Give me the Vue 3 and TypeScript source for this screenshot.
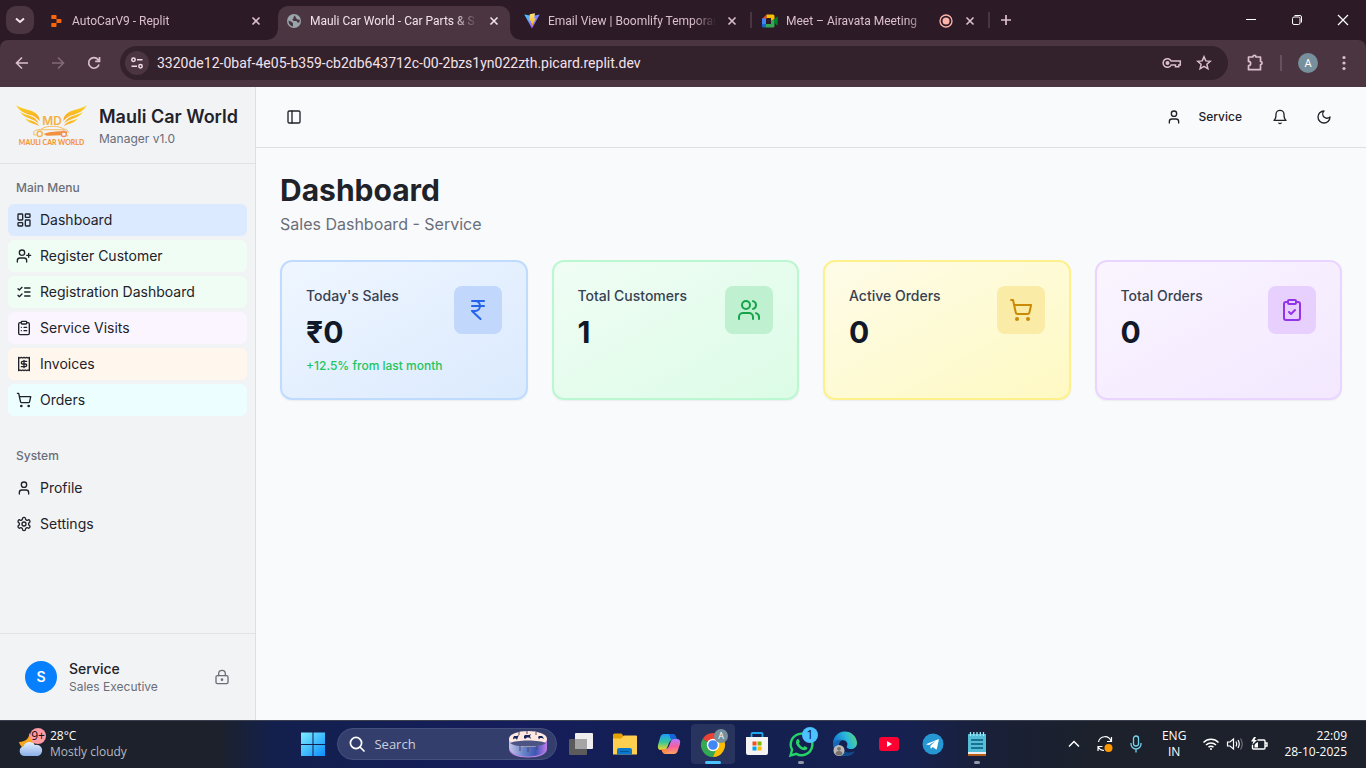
<script setup lang="ts">
import { h, ref } from 'vue'

type Shape = [string, Record<string, string | number>]

const p = (d: string): Shape => ['path', { d }]
const c = (cx: number, cy: number, r: number): Shape => ['circle', { cx, cy, r }]
const r = (x: number, y: number, width: number, height: number, rx: number): Shape => ['rect', { x, y, width, height, rx }]

const clipboard: Shape[] = [
  r(8, 2, 8, 4, 1),
  p('M16 4h2a2 2 0 0 1 2 2v14a2 2 0 0 1-2 2H6a2 2 0 0 1-2-2V6a2 2 0 0 1 2-2h2'),
]

const shapes: Record<string, Shape[]> = {
  dashboard: [r(3, 3, 7, 9, 1), r(14, 3, 7, 5, 1), r(14, 12, 7, 9, 1), r(3, 16, 7, 5, 1)],
  userPlus: [p('M16 21v-2a4 4 0 0 0-4-4H6a4 4 0 0 0-4 4v2'), c(9, 7, 4), p('M19 8v6M22 11h-6')],
  listChecks: [p('m3 17 2 2 4-4M3 7l2 2 4-4M13 6h8M13 12h8M13 18h8')],
  clipboardList: [...clipboard, p('M12 11h4M12 16h4M8 11h.01M8 16h.01')],
  clipboardCheck: [...clipboard, p('m9 14 2 2 4-4')],
  receipt: [
    p('M4 2v20l2-1 2 1 2-1 2 1 2-1 2 1 2-1 2 1V2l-2 1-2-1-2 1-2-1-2 1-2-1-2 1Z'),
    p('M16 8h-6a2 2 0 1 0 0 4h4a2 2 0 1 1 0 4H8M12 17.5v-11'),
  ],
  cart: [
    c(8, 21, 1),
    c(19, 21, 1),
    p('M2.05 2.05h2l2.66 12.42a2 2 0 0 0 2 1.58h9.78a2 2 0 0 0 1.95-1.57l1.65-7.43H5.12'),
  ],
  user: [p('M19 21v-2a4 4 0 0 0-4-4H9a4 4 0 0 0-4 4v2'), c(12, 7, 4)],
  settings: [
    p('M12.22 2h-.44a2 2 0 0 0-2 2v.18a2 2 0 0 1-1 1.73l-.43.25a2 2 0 0 1-2 0l-.15-.08a2 2 0 0 0-2.73.73l-.22.38a2 2 0 0 0 .73 2.73l.15.1a2 2 0 0 1 1 1.72v.51a2 2 0 0 1-1 1.74l-.15.09a2 2 0 0 0-.73 2.73l.22.38a2 2 0 0 0 2.73.73l.15-.08a2 2 0 0 1 2 0l.43.25a2 2 0 0 1 1 1.73V20a2 2 0 0 0 2 2h.44a2 2 0 0 0 2-2v-.18a2 2 0 0 1 1-1.73l.43-.25a2 2 0 0 1 2 0l.15.08a2 2 0 0 0 2.73-.73l.22-.39a2 2 0 0 0-.73-2.73l-.15-.08a2 2 0 0 1-1-1.74v-.5a2 2 0 0 1 1-1.74l.15-.09a2 2 0 0 0 .73-2.73l-.22-.38a2 2 0 0 0-2.73-.73l-.15.08a2 2 0 0 1-2 0l-.43-.25a2 2 0 0 1-1-1.73V4a2 2 0 0 0-2-2z'),
    c(12, 12, 3),
  ],
  lock: [c(12, 16, 1), r(3, 10, 18, 12, 2), p('M7 10V7a5 5 0 0 1 10 0v3')],
  panel: [r(3, 3, 18, 18, 2), p('M9 3v18')],
  bell: [p('M6 8a6 6 0 0 1 12 0c0 7 3 9 3 9H3s3-2 3-9M10.3 21a1.94 1.94 0 0 0 3.4 0')],
  moon: [p('M12 3a6 6 0 0 0 9 9 9 9 0 1 1-9-9Z')],
  rupee: [p('M6 3h12M6 8h12M6 13l8.5 8M6 13h3M9 13c6.667 0 6.667-10 0-10')],
  users: [
    p('M16 21v-2a4 4 0 0 0-4-4H6a4 4 0 0 0-4 4v2'),
    c(9, 7, 4),
    p('M22 21v-2a4 4 0 0 0-3-3.87M16 3.13a4 4 0 0 1 0 7.75'),
  ],
}

const LineIcon = (props: { name: string; size?: number }) =>
  h(
    'svg',
    {
      width: props.size ?? 16,
      height: props.size ?? 16,
      viewBox: '0 0 24 24',
      fill: 'none',
      stroke: 'currentColor',
      'stroke-width': 2,
      'stroke-linecap': 'round',
      'stroke-linejoin': 'round',
      'aria-hidden': 'true',
    },
    shapes[props.name].map(([tag, attrs]) => h(tag, attrs)),
  )
LineIcon.props = ['name', 'size']

interface Tab { id: string; title: string; active?: boolean; recording?: boolean; divider?: boolean }
const tabs: Tab[] = [
  { id: 'replit', title: 'AutoCarV9 - Replit' },
  { id: 'globe', title: 'Mauli Car World - Car Parts & S', active: true },
  { id: 'vite', title: 'Email View | Boomlify Temporar', divider: true },
  { id: 'meet', title: 'Meet – Airavata Meeting', recording: true, divider: true },
]

const url = ref('3320de12-0baf-4e05-b359-cb2db643712c-00-2bzs1yn022zth.picard.replit.dev')

const mainMenu = [
  { label: 'Dashboard', icon: 'dashboard', tone: 'blue' },
  { label: 'Register Customer', icon: 'userPlus', tone: 'green' },
  { label: 'Registration Dashboard', icon: 'listChecks', tone: 'green' },
  { label: 'Service Visits', icon: 'clipboardList', tone: 'purple' },
  { label: 'Invoices', icon: 'receipt', tone: 'orange' },
  { label: 'Orders', icon: 'cart', tone: 'cyan' },
]
const systemMenu = [
  { label: 'Profile', icon: 'user' },
  { label: 'Settings', icon: 'settings' },
]

const stats = [
  { label: "Today's Sales", value: '₹0', note: '+12.5% from last month', icon: 'rupee', tone: 'blue' },
  { label: 'Total Customers', value: '1', note: '', icon: 'users', tone: 'green' },
  { label: 'Active Orders', value: '0', note: '', icon: 'cart', tone: 'yellow' },
  { label: 'Total Orders', value: '0', note: '', icon: 'clipboardCheck', tone: 'purple' },
]
</script>

<template>
  <div class="screen">
    <header class="browser">
      <div class="tabstrip">
        <button class="tab-search" aria-label="Search tabs">
          <svg width="12" height="12" viewBox="0 0 12 12" fill="none" stroke="currentColor" stroke-width="2"><path d="M2 4.500 6 8l4-3.500" /></svg>
        </button>
        <div v-for="tab in tabs" :key="tab.id" class="tab" :class="{ active: tab.active, divider: tab.divider }">
          <svg v-if="tab.id === 'replit'" class="favicon" viewBox="0 0 16 16" fill="#fb650b">
            <path d="M4 2h3.800q.7 0 .7.700V6H4Q3.300 6 3.300 5.300V2.700Q3.300 2 4 2ZM8.500 6h4.200q.7 0 .7.700v2.600q0 .7-.7.700H8.500ZM4 10h4.500v3.300q0 .7-.7.700H4q-.7 0-.7-.7v-2.600Q3.300 10 4 10Z" />
          </svg>
          <svg v-else-if="tab.id === 'globe'" class="favicon" viewBox="0 0 16 16">
            <circle cx="8" cy="8" r="7" fill="#9aa5ab" />
            <path d="M2.500 7.500 6 9l1 1.500v3q-4.500-.8-4.500-6ZM9 2.500 7.500 4v1.500L6.200 6.500 7.500 8h3l1 1.500 1.500.3q1-1.300.8-3L11.500 6.500 10 5Z" fill="#4a3541" />
          </svg>
          <svg v-else-if="tab.id === 'vite'" class="favicon" viewBox="0 0 16 16">
            <defs>
              <linearGradient id="vt" x1="0" y1="0" x2="1" y2="1"><stop offset="0" stop-color="#41d1ff" /><stop offset="1" stop-color="#bd34fe" /></linearGradient>
              <linearGradient id="vy" x1="0" y1="0" x2="0" y2="1"><stop offset="0" stop-color="#ffea83" /><stop offset="1" stop-color="#ffa800" /></linearGradient>
            </defs>
            <path d="M.3 1.500 8 15.500 15.700 1.500 8.500 3Z" fill="url(#vt)" />
            <path d="m11 .2-5.200 1-.4 6.800 1.800-.3-.5 2.600 1.400-.3-.2 3.300 4-8-1.800.2Z" fill="url(#vy)" />
          </svg>
          <svg v-else class="favicon" viewBox="0 0 16 16">
            <path d="M0 6 4.500 1.500V6Z" fill="#ea4335" />
            <path d="M4.500 1.500H11q1.500 0 1.500 1.500v3L9 8V5H4.500Z" fill="#fbbc04" />
            <path d="M0 5.500h4v5.500H0Z" fill="#4285f4" />
            <path d="M0 11h4v3.500H1.500Q0 14.500 0 13Z" fill="#1967d2" />
            <path d="M4 11h5V8l3.500-2v7q0 1.500-1.500 1.500H4Z" fill="#34a853" />
            <path d="m12 6.500 3-2.700q.7-.5.700.4v7.600q0 .9-.7.400L12 9.500Z" fill="#00832d" />
          </svg>
          <span class="tab-title">{{ tab.title }}</span>
          <svg v-if="tab.recording" class="recording" viewBox="0 0 16 16"><circle cx="8" cy="8" r="6" fill="none" stroke="#ffb4ab" stroke-width="1.300" /><circle cx="8" cy="8" r="3.500" fill="#ffb4ab" /></svg>
          <button class="tab-close" :aria-label="`Close ${tab.title}`">
            <svg width="10" height="10" viewBox="0 0 10 10" stroke="currentColor" stroke-width="1.600"><path d="m1.500 1.500 7 7M8.500 1.500l-7 7" /></svg>
          </button>
        </div>
        <button class="new-tab" aria-label="New tab">
          <svg width="12" height="12" viewBox="0 0 12 12" stroke="currentColor" stroke-width="1.700"><path d="M6 1v10M1 6h10" /></svg>
        </button>
        <div class="window-buttons">
          <button aria-label="Minimize"><svg width="12" height="12" viewBox="0 0 12 12" stroke="#fff"><path d="M1 5.500h10" /></svg></button>
          <button aria-label="Restore"><svg width="12" height="12" viewBox="0 0 12 12" fill="none" stroke="#fff"><rect x="1.500" y="3" width="7.500" height="7.500" rx="1.500" /><path d="M3.500 1.500H9q1.500 0 1.500 1.500v5.500" /></svg></button>
          <button aria-label="Close window"><svg width="12" height="12" viewBox="0 0 12 12" stroke="#fff" stroke-width="1.200"><path d="m1 1 10 10M11 1 1 11" /></svg></button>
        </div>
      </div>

      <div class="toolbar">
        <button class="nav-button" aria-label="Back"><svg width="16" height="16" viewBox="0 0 16 16" fill="none" stroke="currentColor" stroke-width="1.600"><path d="M14 8H3M8 2.500 2.500 8 8 13.500" /></svg></button>
        <button class="nav-button dim" aria-label="Forward"><svg width="16" height="16" viewBox="0 0 16 16" fill="none" stroke="currentColor" stroke-width="1.600"><path d="M2 8h11M8 2.500 13.500 8 8 13.500" /></svg></button>
        <button class="nav-button" aria-label="Reload"><svg width="16" height="16" viewBox="0 0 16 16" fill="none" stroke="currentColor" stroke-width="1.700"><path d="M13 9.500A5.300 5.300 0 1 1 12 4.500L13.300 6M13.500 2v4.300H9.200" /></svg></button>
        <div class="omnibox">
          <button class="site-info" aria-label="View site information">
            <svg width="14" height="14" viewBox="0 0 14 14" fill="none" stroke="currentColor" stroke-width="1.500"><circle cx="3.500" cy="3.800" r="1.700" /><path d="M7 3.800h5.500M1.500 10.200H7" /><circle cx="10.500" cy="10.200" r="1.700" /></svg>
          </button>
          <input v-model="url" class="url" aria-label="Address" spellcheck="false">
          <button class="plain" aria-label="Manage passwords"><svg width="20" height="16" viewBox="0 0 20 16" fill="none" stroke="currentColor" stroke-width="1.500"><path d="M9.200 6H18.300v4h-1.500v1.800h-3.300V10H9.200a4.300 4.300 0 1 1 0-4Z" /><circle cx="5.500" cy="8" r="1.300" fill="currentColor" /></svg></button>
          <button class="plain" aria-label="Bookmark"><svg width="16" height="16" viewBox="0 0 16 16" fill="none" stroke="currentColor" stroke-width="1.500"><path d="m8 1.700 1.800 4.200 4.500.4-3.400 3 1 4.500L8 11.400l-3.900 2.400 1-4.500-3.400-3 4.500-.4Z" /></svg></button>
        </div>
        <button class="extensions" aria-label="Extensions"><svg width="18" height="18" viewBox="0 0 18 18" fill="none" stroke="currentColor" stroke-width="1.700"><path d="M2.500 3h4.300a1.600 1.600 0 0 1 3.200 0h4.500v4.500a1.600 1.600 0 0 1 0 3.200v5H2.500v-4a2.100 2.100 0 0 0 0-4.300Z" stroke-linejoin="round" /></svg></button>
        <span class="toolbar-rule"></span>
        <button class="profile" aria-label="Profile A">A</button>
        <button class="more" aria-label="Browser menu"><svg width="4" height="16" viewBox="0 0 4 16" fill="currentColor"><circle cx="2" cy="2.500" r="1.600" /><circle cx="2" cy="8" r="1.600" /><circle cx="2" cy="13.500" r="1.600" /></svg></button>
      </div>
    </header>

    <div class="app">
      <aside class="sidebar">
        <div class="brand">
          <svg class="logo" viewBox="0 0 72 44" role="img" aria-label="Mauli Car World logo">
            <defs>
              <linearGradient id="wing" x1="0" y1="0" x2="0" y2="1"><stop offset="0" stop-color="#fcd21c" /><stop offset="1" stop-color="#f6a32c" /></linearGradient>
              <g id="feathers" fill="url(#wing)">
                <path d="M0 2c6 4 14 4 20 8 3 2 4 5 4 8-4-5-8-6-12-7C7 9.500 3 7 0 2Z" />
                <path d="M4 8.800c5 3 10 3 14 5.500 2.500 1.700 4 3.700 5 6.200-4-3.500-7-4-10.500-5.500C9 13.500 6.500 12 4 8.800Z" />
                <path d="M9.500 15.500c3 1.800 6 1.800 9 3.200 2.500 1.200 4 2.600 5 4.300-3-1.800-5.500-2-8-3-2.500-1-4.500-2.200-6-4.500Z" />
              </g>
            </defs>
            <use href="#feathers" />
            <use href="#feathers" transform="matrix(-1 0 0 1 72 0)" />
            <text x="36.500" y="22.500" class="logo-initials">MD</text>
            <path d="M18 29c1-2 4-2 7-2.500 4-2.600 7-3.200 13-3.200 5 0 8 1.400 11 2.900 3 .5 4 1.500 4 3.800M23 26.800h26" fill="none" stroke="#f3bd62" stroke-width="1" />
            <path d="M28 31c6-2 12-3 24-2.500l-1 2.500c-2-2-5-1-5.500 1.500L33 33c-2 0-3-.8-5-2Z" fill="#f2913d" />
            <circle cx="24" cy="31" r="2.600" fill="none" stroke="#f3b34c" stroke-width="1.400" />
            <circle cx="48.500" cy="31" r="2.600" fill="none" stroke="#ef8f62" stroke-width="1.400" />
            <path d="M18 29v3h3M51 33h2" fill="none" stroke="#f5bd60" />
            <text x="36" y="42" class="logo-name">MAULI CAR WORLD</text>
          </svg>
          <div>
            <div class="brand-name">Mauli Car World</div>
            <div class="brand-sub">Manager v1.0</div>
          </div>
        </div>

        <nav class="menus">
          <section class="menu">
            <h2>Main Menu</h2>
            <a v-for="item in mainMenu" :key="item.label" href="#" :class="item.tone"><LineIcon :name="item.icon" /><span>{{ item.label }}</span></a>
          </section>
          <section class="menu">
            <h2>System</h2>
            <a v-for="item in systemMenu" :key="item.label" href="#"><LineIcon :name="item.icon" /><span>{{ item.label }}</span></a>
          </section>
        </nav>

        <div class="account">
          <span class="avatar">S</span>
          <div class="account-text">
            <div class="account-name">Service</div>
            <div class="account-role">Sales Executive</div>
          </div>
          <button class="lock" aria-label="Lock"><LineIcon name="lock" /></button>
        </div>
      </aside>

      <div class="content">
        <div class="topbar">
          <button class="panel-toggle" aria-label="Toggle sidebar"><LineIcon name="panel" /></button>
          <div class="topbar-actions">
            <button class="user-button"><LineIcon name="user" />Service</button>
            <button class="icon-button" aria-label="Notifications"><LineIcon name="bell" /></button>
            <button class="icon-button" aria-label="Toggle theme"><LineIcon name="moon" /></button>
          </div>
        </div>
        <main>
          <h1>Dashboard</h1>
          <p class="subtitle">Sales Dashboard - Service</p>
          <div class="cards">
            <article v-for="stat in stats" :key="stat.label" class="card" :class="stat.tone">
              <div>
                <p class="card-label">{{ stat.label }}</p>
                <p class="card-value">{{ stat.value }}</p>
                <p v-if="stat.note" class="card-note">{{ stat.note }}</p>
              </div>
              <span class="card-icon"><LineIcon :name="stat.icon" :size="24" /></span>
            </article>
          </div>
        </main>
      </div>
    </div>

    <footer class="taskbar">
      <button class="weather">
        <svg width="28" height="32" viewBox="0 0 28 32">
          <defs><linearGradient id="cloud" x1="0" y1="0" x2="0" y2="1"><stop offset="0" stop-color="#e5efff" /><stop offset="1" stop-color="#8aaee8" /></linearGradient></defs>
          <path d="M11 5c1 5-4 9-10 9 1 4 4 7 9 7 6 0 10-7 1-16Z" fill="#f6a51c" />
          <path d="M6 28a5 5 0 0 1-.5-9.800A6.500 6.500 0 0 1 17 17a5.600 5.600 0 0 1 3 11Z" fill="url(#cloud)" />
          <circle cx="20" cy="8" r="8" fill="#ff99a4" />
          <text x="20" y="12" class="badge-text">9+</text>
        </svg>
        <span><b>28°C</b><br>Mostly cloudy</span>
      </button>

      <div class="pinned">
        <button class="task" aria-label="Start">
          <svg width="24" height="24" viewBox="0 0 24 24">
            <defs><linearGradient id="win" x1="0" y1="0" x2="1" y2="1"><stop offset="0" stop-color="#7eeeff" /><stop offset="1" stop-color="#0a8dff" /></linearGradient></defs>
            <path d="M0 .5h11.500V12H0ZM12.500.500H24V12H12.500ZM0 13h11.500v11H0ZM12.500 13H24v11H12.500Z" fill="url(#win)" />
          </svg>
        </button>
        <label class="search">
          <svg width="16" height="16" viewBox="0 0 16 16" fill="none" stroke="#fff" stroke-width="1.700"><circle cx="7" cy="7" r="5.600" /><path d="m11 11 4 4" stroke-linecap="round" /></svg>
          <input type="search" placeholder="Search" aria-label="Search">
          <svg width="40" height="28" viewBox="0 0 40 28">
            <defs><linearGradient id="drum"><stop offset="0" stop-color="#c7c3e8" /><stop offset=".4" stop-color="#6482c8" /><stop offset=".7" stop-color="#3e56b4" /><stop offset="1" stop-color="#c07af0" /></linearGradient></defs>
            <path d="M1 9v9c0 5 8 9 19 9s19-4 19-9V9Z" fill="url(#drum)" />
            <path d="M1 17c0 6 8 9.500 19 9.500S39 23 39 17v2c0 5-8 8.500-19 8.500S1 24 1 19Z" fill="#bc83e7" />
            <ellipse cx="20" cy="9" rx="19" ry="8" fill="#ffe8e0" />
            <path d="M2 13c3-1.500 10-2.500 18-2.500s15 1 18 2.500c-3 2.500-9 3.500-18 3.500S5 15.500 2 13Z" fill="#4b5484" />
            <path d="M11 2v3M19 1v3M28 2v3M12 16v5M20 17v5M29 16v4" stroke="#514667" />
            <path d="m5 8 1-2h3l2-1-1 2-1 3-1-1.500H6l-1 1ZM16 6l1-1h4l2-1-1 2 1 3-2-1.500h-2L17 9l-1-1ZM30 7l1-1h3l1 1 1 2-2-1h-2l-1 1.500Z" fill="#17245b" />
          </svg>
        </label>
        <button class="task" aria-label="Task view"><svg width="24" height="24" viewBox="0 0 24 24"><rect y="7" width="18" height="16" rx="1" fill="#5b5b5b" /><rect x="6" y="1" width="18" height="16" rx="1" fill="#eee" /><path d="M6 7h12v10H6Z" fill="#a5a5a5" /></svg></button>
        <button class="task" aria-label="File Explorer">
          <svg width="26" height="24" viewBox="0 0 26 24"><path d="M1 3q0-1.500 1.500-1.500h7l2 2.500H24q1 0 1 1v8H1Z" fill="#e5a100" /><path d="M1 6.500h8l3-3h12q1 0 1 1V22q0 .5-.5.500h-23Q1 22.500 1 22Z" fill="#ffd04f" /><path d="M5 22.500V18q0-2 2-2h11q2 0 2 2v4.500Z" fill="#0b78cf" /><path d="M8 19.500h9" stroke="#075593" /></svg>
        </button>
        <button class="task" aria-label="Copilot">
          <svg width="24" height="24" viewBox="0 0 24 24">
            <defs>
              <linearGradient id="ca" x1="0" y1="0" x2="0" y2="1"><stop offset="0" stop-color="#1b9cff" /><stop offset=".5" stop-color="#35c69e" /><stop offset="1" stop-color="#f3d524" /></linearGradient>
              <linearGradient id="cb" x1="0" y1="0" x2="0" y2="1"><stop offset="0" stop-color="#b57aff" /><stop offset=".5" stop-color="#f65f9f" /><stop offset="1" stop-color="#ffa35c" /></linearGradient>
            </defs>
            <path d="M7 2h9q2 0 3 3l1 3h-5q-2 0-3 3l-2 5q-1 2-3 2H4q-4 0-3-5L3 6q1-4 4-4Z" fill="url(#ca)" />
            <path d="M12 2h4q2 0 3 3l1 3h-5q-1 0-2-3Z" fill="#1664d8" />
            <path d="M17 22H8q-2 0-3-3l-.5-2H9q2 0 3-3l2-5q1-2 3-2h3q4 0 3 5l-2 6q-1 4-4 4Z" fill="url(#cb)" />
            <path d="M8 22q-2 0-3-3l-.5-2H9q1 0 1.500 2Z" fill="#ff8b49" />
          </svg>
        </button>
        <button class="task current" aria-label="Google Chrome">
          <svg width="30" height="30" viewBox="0 0 30 30">
            <path d="M15 16 4.600 10a12 12 0 0 1 20.800 0Z" fill="#ea4335" />
            <path d="M15 16 4.600 10A12 12 0 0 0 15 28l6-9Z" fill="#34a853" />
            <path d="M15 16h5.200L15 28A12 12 0 0 0 25.400 10H15Z" fill="#fbbc04" />
            <circle cx="15" cy="16" r="6.200" fill="#fff" /><circle cx="15" cy="16" r="4.800" fill="#4285f4" />
            <circle cx="23" cy="7" r="7" fill="#78909c" /><text x="23" y="10" class="chrome-badge">A</text>
          </svg>
        </button>
        <button class="task" aria-label="Microsoft Store">
          <svg width="24" height="24" viewBox="0 0 24 24"><path d="M6.500 6V2q0-1 1-1h9q1 0 1 1v4" fill="none" stroke="#1ca7ef" stroke-width="1.800" /><path d="M1 5h22v16q0 2-2 2H3q-2 0-2-2Z" fill="#f4f4f4" /><path d="M7.500 9.500h4v4h-4Z" fill="#f25022" /><path d="M12.500 9.500h4v4h-4Z" fill="#7fba00" /><path d="M7.500 14.500h4v4h-4Z" fill="#00a4ef" /><path d="M12.500 14.500h4v4h-4Z" fill="#ffb900" /></svg>
        </button>
        <button class="task open" aria-label="WhatsApp">
          <svg width="34" height="34" viewBox="0 0 34 34">
            <path d="m6.500 28.500 1.600-5.800a10.800 10.800 0 1 1 4.200 4.200Z" fill="none" stroke="#25d366" stroke-width="2.400" />
            <path d="M13 12.500c.8-.8 1.700-.5 2 .3l.7 1.800c.2.500-.1 1-.8 1.700 1 2 2.300 3.300 4.300 4.200.8-1 1.200-1.400 1.700-1.200l2 1c.7.400.5 1.500-.3 2.300-3.500 3-11.300-3.500-10.600-7.800.1-1 .5-1.800 1-2.300Z" fill="#25d366" />
            <circle cx="26" cy="8" r="8" fill="#4cc2ff" /><text x="26" y="12" class="badge-text">1</text>
          </svg>
        </button>
        <button class="task" aria-label="Microsoft Edge">
          <svg width="26" height="26" viewBox="0 0 26 26">
            <defs><linearGradient id="edge" x1="0" y1=".3" x2="1" y2="0"><stop offset="0" stop-color="#1679cf" /><stop offset=".5" stop-color="#29b8dc" /><stop offset="1" stop-color="#62d66f" /></linearGradient></defs>
            <path d="M1 13A12 12 0 0 1 25 12c0 4-3 6-6 6-3.500 0-5-1.500-4-3 1.500-3-1-6-5-6-4 0-7 2-9 4Z" fill="url(#edge)" />
            <path d="M1 13c2-4 6-5 9.500-4C7 10.500 6 14 8 18c2 4 7 6 14 4a12 12 0 0 1-9 3C6 25 1 19.500 1 13Z" fill="#1769b8" />
            <path d="M8 14c0 6 6 9 13.500 6.500.8-.3 1.300 0 .8.800A12 12 0 0 1 13 25c-4-2-6-6-5-11Z" fill="#114a8b" />
            <circle cx="7" cy="19.500" r="5.500" fill="#bcb9b5" /><circle cx="7" cy="17.800" r="1.900" fill="#77726f" /><path d="M3.500 23q0-3 3.500-3t3.500 3q-3.500 3-7 0Z" fill="#77726f" />
          </svg>
        </button>
        <button class="task" aria-label="YouTube"><svg width="20" height="14" viewBox="0 0 20 14"><rect width="20" height="14" rx="3" fill="#f03" /><path d="M8 4v6l5-3Z" fill="#fff" /></svg></button>
        <button class="task" aria-label="Telegram"><svg width="22" height="22" viewBox="0 0 22 22"><circle cx="11" cy="11" r="10.500" fill="#2598d4" /><path d="m4.500 11 11.700-4.800q.8-.2.600.8l-2 9q-.2.800-1 .3l-3-2.200-1.500 1.500q-.5.400-.6-.3l-.4-2.500 5.500-5-6.800 4.300-2.600-.7q-.5-.2.100-.4Z" fill="#fff" /></svg></button>
        <button class="task open" aria-label="Notepad"><svg width="20" height="26" viewBox="0 0 20 26"><path d="M1 3h18v18H1Z" fill="#54bdd7" /><path d="M1 21h18v2H1Z" fill="#eee" /><path d="M1 23h18v2H1Z" fill="#b75e1b" /><path d="M4 9h12M4 13h12M4 17h12" stroke="#075a7d" stroke-width="1.500" /><path d="M3.500 1v4M6.800 1v4M10 1v4M13.300 1v4M16.500 1v4" stroke="#9beafb" stroke-width="1.300" /></svg></button>
      </div>

      <div class="tray">
        <button aria-label="Show hidden icons"><svg width="12" height="8" viewBox="0 0 12 8" fill="none" stroke="#fff" stroke-width="1.500"><path d="M1 6.500 6 1.500l5 5" /></svg></button>
        <button aria-label="Update available"><svg width="18" height="20" viewBox="0 0 18 20" fill="none" stroke="#fff" stroke-width="1.200"><path d="M2.500 8A6.500 6.500 0 0 1 15 7M15.500 3v4.500H11M2 17v-4.500h4.500M2 12.500A7 7 0 0 0 8 16.500" /><circle cx="12.500" cy="14" r="4" fill="#ff9800" stroke="none" /></svg></button>
        <button aria-label="Microphone in use"><svg width="12" height="18" viewBox="0 0 12 18" fill="none" stroke="#76d5ef" stroke-width="1.300"><rect x="3.500" y="1" width="5" height="10" rx="2.500" /><path d="M1 8v1a5 5 0 0 0 10 0V8M6 14v3.500" /></svg></button>
        <button class="language">ENG<br>IN</button>
        <button class="system-icons" aria-label="Network, volume, battery">
          <svg width="18" height="14" viewBox="0 0 18 14" fill="none" stroke="#fff" stroke-width="1.500"><path d="M1.500 5.500a10.500 10.500 0 0 1 15 0M4 8a7 7 0 0 1 10 0M6.500 10.300a3.500 3.500 0 0 1 5 0" /><circle cx="9" cy="12" r="1" fill="#fff" stroke="none" /></svg>
          <svg width="18" height="14" viewBox="0 0 18 14" fill="none" stroke="#fff" stroke-width="1.200"><path d="M1.500 5H4l3.500-3v10L4 9H1.500ZM10 4.500q1.500 2.500 0 5M12 3q2.500 4 0 8" /><path d="M14.500 1.500q3.500 5.500 0 11" opacity=".35" /></svg>
          <svg width="18" height="14" viewBox="0 0 18 14" fill="none" stroke="#fff" stroke-width="1.400"><path d="M7.500 3H14q1 0 1 1v7q0 1-1 1H3.500q-1 0-1-1V8M15.500 6H17v3h-1.500" /><path d="M5.500 6.500 8 5v5.500H4.500V8ZM4 0 1 4.500h2.500L2 8l5-5H4.500L6 0Z" fill="#fff" stroke="none" /></svg>
        </button>
        <button class="clock">22:09<br>28-10-2025</button>
      </div>
    </footer>
  </div>
</template>

<style>
body {
  margin: 0;
}
</style>

<style scoped>
.screen {
  display: flex;
  flex-direction: column;
  height: 100vh;
  overflow: hidden;
  font-family: Inter, "Liberation Sans", sans-serif;
  color: #1f2229;
}
.screen *,
.screen *::before,
.screen *::after {
  box-sizing: border-box;
}
button,
input {
  font: inherit;
  color: inherit;
  background: none;
  border: 0;
  padding: 0;
  margin: 0;
}
button {
  display: flex;
  align-items: center;
  justify-content: center;
}
svg {
  flex: none;
  display: block;
}
h1,
h2,
p {
  margin: 0;
}
a {
  color: inherit;
  text-decoration: none;
}

/* Browser frame */
.browser {
  flex: none;
  background: #2c1b26;
  color: #dcbfcd;
  font-family: Roboto, "Open Sans", sans-serif;
}
.tabstrip {
  display: flex;
  align-items: flex-end;
  height: 40px;
  padding-left: 6px;
}
.tab-search {
  width: 28px;
  height: 28px;
  margin: 0 6px 6px 0;
  border-radius: 10px;
  background: #4a3541;
  color: #f4e4ec;
}
.tab {
  position: relative;
  display: flex;
  align-items: center;
  flex: 0 1 232px;
  min-width: 0;
  height: 34px;
  margin-right: 6px;
  padding: 0 8px 5px;
  font-size: 12px;
}
.tab.active {
  background: #4a3541;
  border-radius: 10px 10px 0 0;
  color: #f3e1ea;
}
.tab.active::before,
.tab.active::after {
  content: "";
  position: absolute;
  bottom: 0;
  width: 10px;
  height: 10px;
}
.tab.active::before {
  left: -10px;
  background: radial-gradient(circle at 0 0, transparent 9px, #4a3541 10px);
}
.tab.active::after {
  right: -10px;
  background: radial-gradient(circle at 100% 0, transparent 9px, #4a3541 10px);
}
.tab.divider::after {
  content: "";
  position: absolute;
  right: -4px;
  top: 6px;
  width: 2px;
  height: 16px;
  background: #4a3541;
}
.favicon {
  width: 16px;
  height: 16px;
  margin-right: 8px;
}
.tab-title {
  flex: 1;
  min-width: 0;
  overflow: hidden;
  white-space: nowrap;
  line-height: 16px;
  margin-right: 8px;
  mask-image: linear-gradient(to left, transparent, #000 24px);
}
.recording {
  width: 16px;
  height: 16px;
  margin-right: 8px;
}
.tab-close {
  width: 16px;
  height: 16px;
}
.new-tab {
  width: 28px;
  height: 28px;
  margin: 0 0 6px;
}
.window-buttons {
  display: flex;
  align-self: flex-start;
  margin-left: auto;
}
.window-buttons button {
  width: 46px;
  height: 40px;
}
.toolbar {
  display: flex;
  align-items: center;
  height: 47px;
  padding: 0 4px 1px;
  background: #4a3541;
  border-radius: 8px 8px 0 0;
}
.nav-button {
  width: 36px;
  height: 34px;
}
.nav-button.dim {
  color: #846977;
}
.omnibox {
  display: flex;
  align-items: center;
  flex: 1;
  height: 34px;
  margin: 0 9px 0 8px;
  padding: 0 8px 0 5px;
  border-radius: 17px;
  background: #33212c;
}
.site-info {
  width: 24px;
  height: 24px;
  border-radius: 50%;
  background: #4a3541;
  color: #f0dce5;
}
.url {
  flex: 1;
  min-width: 0;
  margin-left: 8px;
  font-size: 14px;
  line-height: 20px;
  color: #f3e1ea;
  outline: 0;
}
.plain {
  width: 32px;
  height: 32px;
}
.extensions {
  width: 36px;
  height: 34px;
}
.toolbar-rule {
  width: 2px;
  height: 16px;
  margin: 0 8px 0 7px;
  background: #695060;
}
.profile {
  width: 20px;
  height: 20px;
  margin: 0 8px;
  border-radius: 50%;
  background: #78909c;
  color: #fff;
  font-size: 11px;
}
.more {
  width: 36px;
  height: 34px;
}

/* Application */
.app {
  display: flex;
  flex: 1;
  min-height: 0;
  background: #f9fafc;
}
.sidebar {
  display: flex;
  flex-direction: column;
  flex: none;
  width: 256px;
  background: #f2f3f5;
  border-right: 1px solid #dcdfe4;
}
.brand {
  display: flex;
  align-items: center;
  gap: 12px;
  padding: 16px;
  border-bottom: 1px solid #e0e2e6;
  white-space: nowrap;
}
.logo {
  width: 71px;
  height: 44px;
}
.logo-initials {
  font: 600 12px Inter, sans-serif;
  text-anchor: middle;
  fill: #f6b13e;
}
.logo-name {
  font: 900 7px Lato, sans-serif;
  text-anchor: middle;
  fill: #f3983a;
}
.brand-name {
  font-size: 18px;
  font-weight: 600;
  line-height: 28px;
}
.brand-sub {
  font-size: 12px;
  line-height: 16px;
  color: #686c78;
}
.menus {
  flex: 1;
  min-height: 0;
  display: flex;
  flex-direction: column;
  gap: 8px;
}
.menu {
  display: flex;
  flex-direction: column;
  gap: 4px;
  padding: 8px;
}
.menu h2 {
  height: 32px;
  margin-bottom: -4px;
  padding: 0 8px;
  font-size: 12px;
  font-weight: 500;
  line-height: 32px;
  color: #6a6e78;
}
.menu a {
  display: flex;
  align-items: center;
  gap: 8px;
  height: 32px;
  padding: 0 8px;
  border-radius: 6px;
  font-size: 14px;
  line-height: 20px;
}
.menu a.blue { background: #dbeafe; }
.menu a.green { background: #f0fdf4; }
.menu a.purple { background: #faf5ff; }
.menu a.orange { background: #fff7ed; }
.menu a.cyan { background: #ecfeff; }
.account {
  display: flex;
  align-items: center;
  gap: 12px;
  height: 87px;
  padding: 0 25px;
  border-top: 1px solid #e0e2e6;
}
.avatar {
  display: flex;
  align-items: center;
  justify-content: center;
  width: 32px;
  height: 32px;
  border-radius: 50%;
  background: #0680ff;
  color: #fff;
  font-size: 14px;
  font-weight: 600;
  line-height: 20px;
}
.account-text {
  flex: 1;
}
.account-name {
  font-size: 14px;
  font-weight: 500;
  line-height: 20px;
}
.account-role {
  font-size: 12px;
  line-height: 16px;
  color: #6a6e78;
}
.lock {
  width: 16px;
  height: 16px;
  color: #6a6e78;
}
.content {
  display: flex;
  flex-direction: column;
  flex: 1;
  min-width: 0;
}
.topbar {
  display: flex;
  align-items: center;
  justify-content: space-between;
  padding: 12px 24px;
  border-bottom: 1px solid #dcdfe4;
}
.panel-toggle {
  width: 28px;
  height: 28px;
}
.topbar-actions {
  display: flex;
  align-items: center;
  gap: 8px;
}
.user-button {
  gap: 16px;
  height: 36px;
  padding: 0 12px;
  font-size: 12px;
  font-weight: 500;
  line-height: 16px;
}
.icon-button {
  width: 36px;
  height: 36px;
}
main {
  padding: 24px;
}
h1 {
  font-size: 30px;
  font-weight: 700;
  line-height: 36px;
}
.subtitle {
  margin: 4px 0 24px;
  font-size: 16px;
  line-height: 24px;
  color: #6a6e78;
}
.cards {
  display: grid;
  grid-template-columns: repeat(4, 1fr);
  gap: 24px;
}
.card {
  display: flex;
  justify-content: space-between;
  padding: 24px;
  border: 2px solid;
  border-radius: 12px;
  box-shadow: 0 1px 2px rgb(0 0 0 / 6%);
}
.card.blue { background: linear-gradient(to bottom right, #eff6ff, #dbeafe); border-color: #bfdbfe; }
.card.green { background: linear-gradient(to bottom right, #f0fdf4, #dcfce7); border-color: #bbf7d0; }
.card.yellow { background: linear-gradient(to bottom right, #fefce8, #fef9c3); border-color: #fef08a; }
.card.purple { background: linear-gradient(to bottom right, #faf5ff, #f3e8ff); border-color: #e9d5ff; }
.card-label {
  font-size: 14px;
  font-weight: 500;
  line-height: 20px;
  color: #374151;
}
.card-value {
  margin-top: 8px;
  font-size: 30px;
  font-weight: 700;
  line-height: 36px;
  color: #111827;
}
.card-note {
  margin-top: 8px;
  font-size: 12px;
  font-weight: 500;
  line-height: 16px;
  color: #22c55e;
}
.card-icon {
  display: flex;
  align-items: center;
  justify-content: center;
  flex: none;
  width: 48px;
  height: 48px;
  border-radius: 8px;
}
.blue .card-icon { background: #c1d7fc; color: #2563eb; }
.green .card-icon { background: #bff1d0; color: #16a34a; }
.yellow .card-icon { background: #faeba7; color: #ca8a04; }
.purple .card-icon { background: #e7d0fd; color: #9333ea; }

/* Taskbar */
.taskbar {
  display: flex;
  align-items: stretch;
  flex: none;
  height: 48px;
  box-shadow: inset 0 1px #3a404f;
  background: linear-gradient(to right, #1c212b 16%, #13204d 20%, #151d5c 38%, #13204f 52%, #162152 66%, #1a2036 73%, #1c212c 80%);
  color: #fff;
  font-family: "Open Sans", "Noto Sans", sans-serif;
  font-size: 12px;
  line-height: 16px;
}
.weather {
  flex: 288 1 0;
  justify-content: flex-start;
  gap: 4px;
  padding-left: 18px;
  text-align: left;
  color: #b5b9c1;
}
.weather b {
  font-weight: 400;
  color: #fff;
}
.badge-text {
  font: 12px "Open Sans", sans-serif;
  text-anchor: middle;
  fill: #111;
}
.chrome-badge {
  font: 9px "Open Sans", sans-serif;
  text-anchor: middle;
  fill: #fff;
}
.pinned {
  display: flex;
  align-items: center;
}
.task {
  position: relative;
  width: 44px;
  height: 40px;
}
.task.current {
  background: rgb(255 255 255 / 9%);
  border-radius: 4px;
}
.task.current::after,
.task.open::after {
  content: "";
  position: absolute;
  bottom: 0;
  width: 6px;
  height: 3px;
  border-radius: 2px;
  background: #9297a7;
}
.task.current::after {
  width: 16px;
  background: #4cc2ff;
}
.search {
  display: flex;
  align-items: center;
  width: 220px;
  height: 32px;
  margin: 0 2px;
  padding: 0 8px 0 11px;
  border: 1px solid #45507f;
  border-radius: 16px;
  background: #333e6c;
}
.search input {
  flex: 1;
  min-width: 0;
  margin-left: 9px;
  font-size: 13px;
  outline: 0;
  appearance: none;
}
.search input::placeholder {
  color: #cdd0dc;
  opacity: 1;
}
.tray {
  flex: 366 1 0;
  display: flex;
  align-items: center;
  justify-content: flex-end;
  gap: 16px;
  padding-right: 19px;
  white-space: nowrap;
}
.language {
  text-align: center;
  margin-left: 4px;
}
.system-icons {
  gap: 6px;
}
.clock {
  text-align: right;
}
</style>
